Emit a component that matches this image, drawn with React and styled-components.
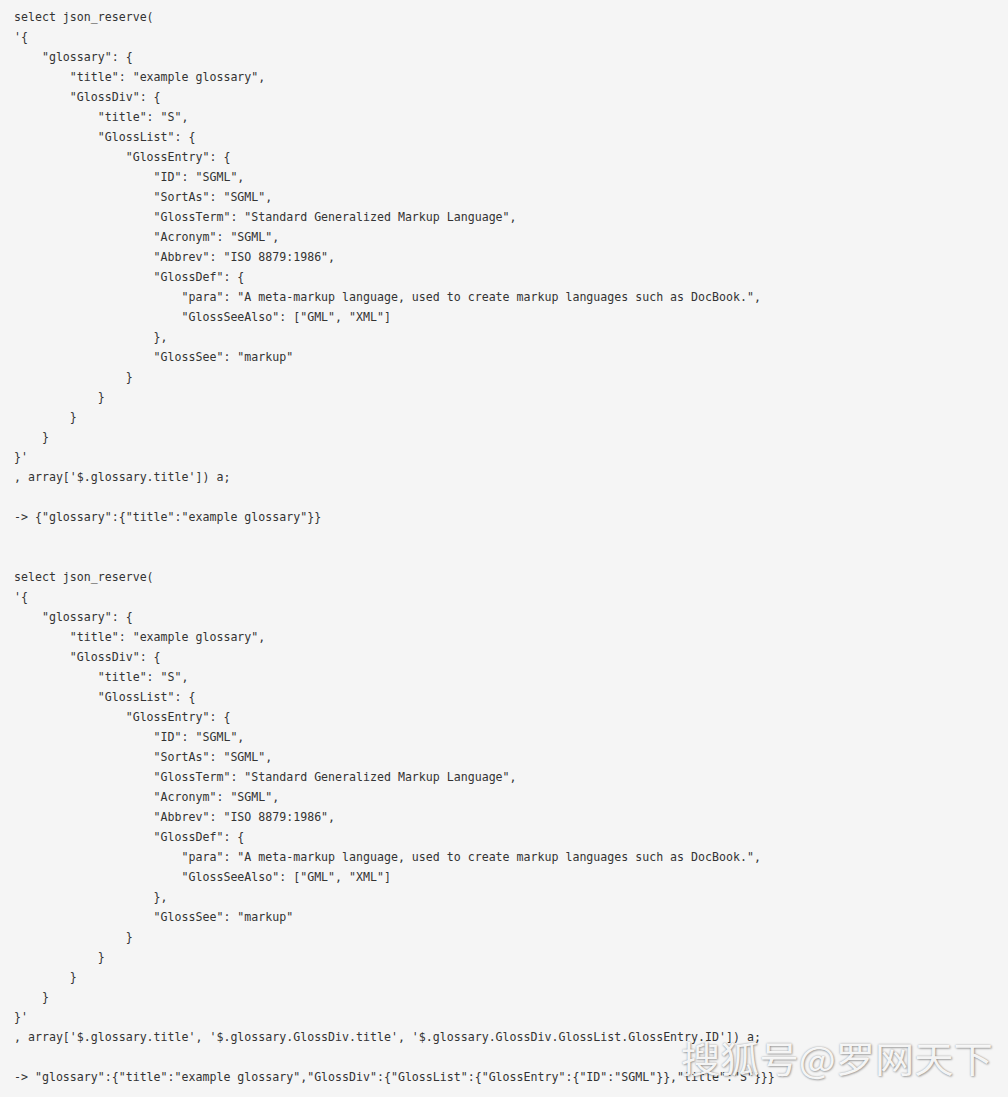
import React from "react";
import styled, { createGlobalStyle } from "styled-components";

const GlobalStyle = createGlobalStyle`
html, body {
  margin: 0;
  padding: 0;
  background: #f5f5f5;
}
`;

const Page = styled.div`
position: relative;
width: 1008px;
height: 1097px;
overflow: hidden;
background: #f5f5f5;
`;

const Code = styled.pre`
margin: 0;
padding: 7px 0 0 14px;
font-family: "DejaVu Sans Mono", "Liberation Mono", monospace;
font-size: 11.6px;
line-height: 20px;
color: #333333;
white-space: pre;
`;

const Watermark = styled.div`
position: absolute;
left: 681px;
top: 1039px;
font-family: "Noto Sans CJK SC", "Noto Sans", sans-serif;
font-size: 36px;
line-height: 36px;
color: rgba(255, 255, 255, 0.92);
text-shadow: 0 0 2px rgba(0, 0, 0, 0.35), 1px 1px 2px rgba(0, 0, 0, 0.25);
white-space: nowrap;
transform: scaleX(1.09);
transform-origin: left top;
`;

const body = `'{
    "glossary": {
        "title": "example glossary",
        "GlossDiv": {
            "title": "S",
            "GlossList": {
                "GlossEntry": {
                    "ID": "SGML",
                    "SortAs": "SGML",
                    "GlossTerm": "Standard Generalized Markup Language",
                    "Acronym": "SGML",
                    "Abbrev": "ISO 8879:1986",
                    "GlossDef": {
                        "para": "A meta-markup language, used to create markup languages such as DocBook.",
                        "GlossSeeAlso": ["GML", "XML"]
                    },
                    "GlossSee": "markup"
                }
            }
        }
    }
}'`;

const queries = [
  {
    paths: "'$.glossary.title'",
    result: `{"glossary":{"title":"example glossary"}}`,
  },
  {
    paths:
      "'$.glossary.title', '$.glossary.GlossDiv.title', '$.glossary.GlossDiv.GlossList.GlossEntry.ID'",
    result: `"glossary":{"title":"example glossary","GlossDiv":{"GlossList":{"GlossEntry":{"ID":"SGML"}},"title":"S"}}}`,
  },
];

function App() {
  const text = queries
    .map(
      (q) =>
        `select json_reserve(\n${body}\n, array[${q.paths}]) a;\n\n-> ${q.result}`
    )
    .join("\n\n\n");

  return (
    <Page>
      <GlobalStyle />
      <Code>{text}</Code>
      <Watermark>搜狐号@罗网天下</Watermark>
    </Page>
  );
}

export default App;
